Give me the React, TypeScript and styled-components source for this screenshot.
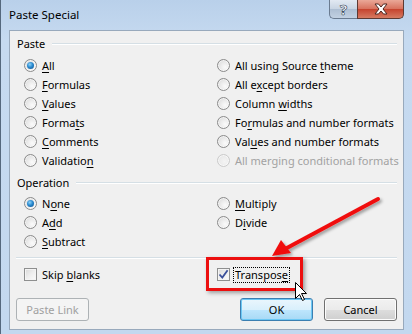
import React from 'react';
import styled, { createGlobalStyle } from 'styled-components';

const GlobalStyle = createGlobalStyle`
  html, body {
    margin: 0;
    padding: 0;
    background: #c3d8ef;
  }
  body {
    font-family: "Segoe UI", "Noto Sans", sans-serif;
    font-size: 11px;
    color: #000;
  }
`;

interface IOption {
  label: string;
  hotkey?: number;
  checked?: boolean;
  disabled?: boolean;
}

const pasteLeft: IOption[] = [
  { label: 'All', hotkey: 0, checked: true },
  { label: 'Formulas', hotkey: 0 },
  { label: 'Values', hotkey: 0 },
  { label: 'Formats', hotkey: 5 },
  { label: 'Comments', hotkey: 0 },
  { label: 'Validation', hotkey: 9 },
];

const pasteRight: IOption[] = [
  { label: 'All using Source theme', hotkey: 17 },
  { label: 'All except borders', hotkey: 5 },
  { label: 'Column widths', hotkey: 7 },
  { label: 'Formulas and number formats', hotkey: 2 },
  { label: 'Values and number formats', hotkey: 3 },
  { label: 'All merging conditional formats', disabled: true },
];

const operationLeft: IOption[] = [
  { label: 'None', hotkey: 1, checked: true },
  { label: 'Add', hotkey: 1 },
  { label: 'Subtract', hotkey: 0 },
];

const operationRight: IOption[] = [
  { label: 'Multiply', hotkey: 0 },
  { label: 'Divide', hotkey: 1 },
];

const Label: React.FC<{ text: string; hotkey?: number }> = ({ text, hotkey }) => {
  if (hotkey === undefined) return <>{text}</>;
  return (
    <>
      {text.slice(0, hotkey)}
      <u>{text[hotkey]}</u>
      {text.slice(hotkey + 1)}
    </>
  );
};

const RadioRow: React.FC<{ option: IOption }> = ({ option }) => (
  <Row $disabled={option.disabled}>
    <Radio $checked={option.checked} $disabled={option.disabled} />
    <span>
      <Label text={option.label} hotkey={option.hotkey} />
    </span>
  </Row>
);

const App: React.FC = () => {
  const rows = (left: IOption[], right: IOption[]) =>
    left.map((option, i) => (
      <React.Fragment key={option.label}>
        <RadioRow option={option} />
        {right[i] ? <RadioRow option={right[i]} /> : <span />}
      </React.Fragment>
    ));

  return (
    <>
      <GlobalStyle />
      <Frame>
        <TitleBar>
          <Title>Paste Special</Title>
          <Controls>
            <HelpButton>?</HelpButton>
            <CloseButton>
              <svg width="16" height="12" viewBox="0 0 16 12">
                <path
                  d="M2 1 L5.5 1 L8 4 L10.5 1 L14 1 L10 6 L14 11 L10.5 11 L8 8 L5.5 11 L2 11 L6 6 Z"
                  fill="#fff"
                  stroke="#4a2620"
                  strokeWidth="1"
                  strokeLinejoin="round"
                />
              </svg>
            </CloseButton>
          </Controls>
        </TitleBar>

        <Client>
          <Legend>
            <span>Paste</span>
          </Legend>
          <OptionGrid $top={4}>{rows(pasteLeft, pasteRight)}</OptionGrid>

          <Legend $top={5}>
            <span>Operation</span>
          </Legend>
          <OptionGrid $top={3}>{rows(operationLeft, operationRight)}</OptionGrid>

          <Separator />

          <OptionGrid $top={6}>
            <Row>
              <Checkbox />
              <span>
                <Label text="Skip blanks" hotkey={5} />
              </span>
            </Row>
            <Row>
              <Checkbox $checked>
                <svg width="11" height="11" viewBox="0 0 11 11">
                  <path d="M1.5 5.5 L4.3 8.6 L9.6 1.2" fill="none" stroke="#3a4f9a" strokeWidth="1.8" />
                </svg>
              </Checkbox>
              <Focused>
                <Label text="Transpose" hotkey={8} />
              </Focused>
            </Row>
          </OptionGrid>

          <ButtonBar>
            <Button disabled>Paste Link</Button>
            <Spacer />
            <Button $primary>OK</Button>
            <Button>Cancel</Button>
          </ButtonBar>
        </Client>

        <Highlight />
        <Overlay width="412" height="334" viewBox="0 0 412 334">
          <defs>
            <filter id="shadow" x="-20%" y="-20%" width="140%" height="140%">
              <feDropShadow dx="2" dy="2" stdDeviation="1.6" floodColor="#000" floodOpacity="0.35" />
            </filter>
          </defs>
          <g filter="url(#shadow)">
            <line x1="377" y1="199" x2="284" y2="249" stroke="#f01010" strokeWidth="4" strokeLinecap="round" />
            <polygon points="271,256 280,240 290,253" fill="#f01010" />
          </g>
          <path
            d="M294.5 282.5 L294.5 298.5 L298.5 294.5 L301.5 300.5 L303.5 299.5 L300.5 293.5 L305.5 293.5 Z"
            fill="#fff"
            stroke="#000"
            strokeWidth="1"
            strokeLinejoin="round"
          />
        </Overlay>
      </Frame>
    </>
  );
};

const Frame = styled.div`
  position: relative;
  width: 412px;
  height: 334px;
  box-sizing: border-box;
  padding: 0 8px 4px 8px;
  display: flex;
  flex-direction: column;
  overflow: hidden;
  background: linear-gradient(180deg, #b9d0ea 0%, #c6daf0 12%, #c3d8ef 100%);
  border-left: 1px solid #55687d;
`;

const TitleBar = styled.div`
  height: 30px;
  display: flex;
  align-items: flex-start;
  margin-left: -1px;
`;

const Title = styled.div`
  margin-top: 7px;
  margin-left: 1px;
  line-height: 16px;
  font-size: 11.5px;
  color: #000;
`;

const Controls = styled.div`
  margin-left: auto;
  display: flex;
`;

const HelpButton = styled.div`
  width: 27px;
  height: 18px;
  display: flex;
  align-items: center;
  justify-content: center;
  font-weight: bold;
  font-size: 15px;
  line-height: 18px;
  color: #fff;
  -webkit-text-stroke: 0.6px #2a3a50;
  border: 1px solid #6a7b90;
  border-top: none;
  border-right: none;
  border-radius: 0 0 0 5px;
  background: linear-gradient(180deg, #e2e9f2 0%, #c9d5e3 48%, #aebfd3 52%, #c2d1e2 100%);
`;

const CloseButton = styled.div`
  width: 45px;
  height: 18px;
  display: flex;
  align-items: center;
  justify-content: center;
  border: 1px solid #5e3a33;
  border-top: none;
  border-radius: 0 0 5px 0;
  background: linear-gradient(180deg, #eaa898 0%, #d8735f 48%, #c6442f 52%, #d67b62 100%);
`;

const Client = styled.div`
  flex: 1;
  display: flex;
  flex-direction: column;
  padding: 0 6px 7px 6px;
  background: #f0f0f0;
  border: 1px solid #98a9bc;
`;

const Legend = styled.div<{ $top?: number }>`
  margin-top: ${(p) => p.$top ?? 5}px;
  height: 16px;
  display: flex;
  align-items: center;
  gap: 7px;
  padding-left: 1px;
  line-height: 16px;

  &::after {
    content: '';
    flex: 1;
    height: 0;
    border-top: 1px solid #d5dfe5;
    border-bottom: 1px solid #fff;
  }
`;

const OptionGrid = styled.div<{ $top: number }>`
  margin-top: ${(p) => p.$top}px;
  padding-left: 8px;
  display: grid;
  grid-template-columns: 193px 1fr;
  grid-auto-rows: 19px;
`;

const Row = styled.div<{ $disabled?: boolean }>`
  display: flex;
  align-items: center;
  gap: 5px;
  white-space: nowrap;
  color: ${(p) => (p.$disabled ? '#a2a2a2' : '#000')};

  u {
    text-underline-offset: 2px;
  }
`;

const Radio = styled.span<{ $checked?: boolean; $disabled?: boolean }>`
  position: relative;
  width: 13px;
  height: 13px;
  box-sizing: border-box;
  border-radius: 50%;
  flex-shrink: 0;
  border: 1px solid ${(p) => (p.$disabled ? '#cbcbcb' : '#8b8b8b')};
  background: ${(p) =>
    p.$disabled
      ? 'radial-gradient(circle at 60% 60%, #f4f4f4, #e3e3e3)'
      : 'radial-gradient(circle at 65% 65%, #fbfbfb 0%, #e7e7e7 55%, #cfcfcf 100%)'};
  box-shadow: inset 0 0 0 1px rgba(255, 255, 255, 0.6);

  &::after {
    content: '';
    display: ${(p) => (p.$checked ? 'block' : 'none')};
    position: absolute;
    left: 2px;
    top: 2px;
    width: 7px;
    height: 7px;
    border-radius: 50%;
    background: radial-gradient(circle at 40% 35%, #8fd3f7 0%, #2a8ad0 45%, #0c4c86 100%);
  }
`;

const Checkbox = styled.span<{ $checked?: boolean }>`
  width: 13px;
  height: 13px;
  box-sizing: border-box;
  flex-shrink: 0;
  display: flex;
  align-items: center;
  justify-content: center;
  border: 1px solid #8e8f8f;
  background: linear-gradient(135deg, #d8d8d8 0%, #eeeeee 50%, #fbfbfb 100%);
  box-shadow: inset 0 0 0 1px #f4f4f4;
`;

const Focused = styled.span`
  margin-left: -2px;
  padding: 0 1px;
  line-height: 14px;
  border: 1px dotted #000;
`;

const Separator = styled.div`
  margin-top: 6px;
  border-top: 1px solid #d5dfe5;
  border-bottom: 1px solid #fff;
`;

const ButtonBar = styled.div`
  margin-top: 14px;
  display: flex;
  gap: 11px;
`;

const Spacer = styled.div`
  flex: 1;
`;

const Button = styled.button<{ $primary?: boolean }>`
  width: 73px;
  height: 23px;
  padding: 0;
  font-family: inherit;
  font-size: 11px;
  color: #000;
  border-radius: 3px;
  border: 1px solid ${(p) => (p.$primary ? '#3c7fb1' : '#707070')};
  background: ${(p) =>
    p.$primary
      ? 'linear-gradient(180deg, #eaf6fd 0%, #d9f0fc 50%, #bee6fd 51%, #a7d9f5 100%)'
      : 'linear-gradient(180deg, #f2f2f2 0%, #ebebeb 50%, #dddddd 51%, #cfcfcf 100%)'};
  box-shadow: inset 0 0 0 1px ${(p) => (p.$primary ? '#6cc8f4' : '#fcfcfc')};

  &:disabled {
    color: #a0a0a0;
    border-color: #adb2b5;
    background: #f4f4f4;
    box-shadow: none;
  }
`;

const Highlight = styled.div`
  position: absolute;
  left: 205px;
  top: 257px;
  width: 97px;
  height: 34px;
  box-sizing: border-box;
  border: 3px solid #ec0f0f;
  box-shadow: 2px 2px 4px rgba(0, 0, 0, 0.35);
  pointer-events: none;
`;

const Overlay = styled.svg`
  position: absolute;
  left: 0;
  top: 0;
  pointer-events: none;
`;

export default App;
